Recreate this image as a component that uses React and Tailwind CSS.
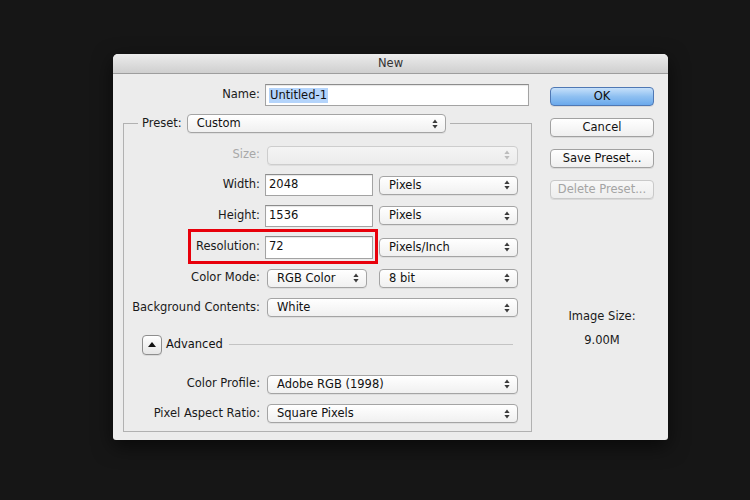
import React from 'react';

function Arrows({ dim }) {
  const c = dim ? '#bcbcbc' : '#3a3a3a';
  return (
    <svg width="6" height="10" viewBox="0 0 6 10" className="shrink-0">
      <path d="M3 0.6 L5.6 4 H0.4 Z" fill={c} />
      <path d="M3 9.4 L5.6 6 H0.4 Z" fill={c} />
    </svg>
  );
}

function Popup({ value, className = '', dim }) {
  return (
    <div
      className={
        'flex items-center justify-between h-[19px] rounded-[4px] border pl-[9px] pr-[7px] bg-linear-to-b shadow-[0_1px_0_rgba(0,0,0,0.06)] ' +
        (dim
          ? 'border-[#cdcdcd] from-[#f4f4f4] to-[#ececec] '
          : 'border-[#a4a4a4] from-white to-[#f0f0f0] text-[#111] ') +
        className
      }
    >
      <span className="leading-none pt-[1px]">{value}</span>
      <Arrows dim={dim} />
    </div>
  );
}

function Field({ children, className = '' }) {
  return (
    <div
      className={
        'flex items-center bg-white border border-[#a3a3a3] border-t-[#8c8c8c] pl-[3px] shadow-[inset_0_1px_1px_rgba(0,0,0,0.10)] text-[#111] ' +
        className
      }
    >
      {children}
    </div>
  );
}

function Label({ children, dim }) {
  return (
    <div className={'w-[136px] shrink-0 text-right ' + (dim ? 'text-[#a8a8a8]' : 'text-[#1a1a1a]')}>
      {children}
    </div>
  );
}

function Button({ children, primary, disabled }) {
  return (
    <div
      className={
        'h-[19px] w-[104px] flex items-center justify-center rounded-[4px] border bg-linear-to-b shadow-[0_1px_0_rgba(0,0,0,0.08)] ' +
        (primary
          ? 'border-[#4f78b4] from-[#c6e0fa] via-[#8fc0f1] to-[#6aa9ec] text-[#0d0d0d]'
          : disabled
          ? 'border-[#c9c9c9] from-[#f7f7f7] to-[#eeeeee] text-[#a4a4a4]'
          : 'border-[#a1a1a1] from-white to-[#efefef] text-[#111]')
      }
    >
      {children}
    </div>
  );
}

export default function App() {
  return (
    <div className="w-[750px] h-[500px] bg-[#161616] pt-[54px] pl-[113px] font-['DejaVu_Sans','Liberation_Sans',sans-serif] text-[11.5px]">
      <div className="w-[555px] h-[386px] flex flex-col rounded-t-[5px] rounded-b-[3px] overflow-hidden bg-[#ececec] shadow-[0_6px_20px_rgba(0,0,0,0.6)]">
        {/* title bar */}
        <div className="h-[20px] shrink-0 flex items-center justify-center bg-linear-to-b from-[#ececec] to-[#cfcfcf] border-b border-[#9d9d9d] text-[#333]">
          New
        </div>

        <div className="flex flex-1">
          {/* left column */}
          <div className="w-[427px] pl-[10px]">
            <div className="flex items-center mt-[10px] h-[22px]">
              <div className="w-[137px] text-right text-[#1a1a1a]">Name:</div>
              <Field className="ml-[5px] w-[264px] h-[22px]">
                <span className="bg-[#b4d4fb] px-[1px] leading-[15px]">Untitled-1</span>
              </Field>
            </div>

            <fieldset className="mt-[8px] w-[409px] border border-[#b1b1b1] pb-[5px]">
              <legend className="ml-[14px] px-[4px]">
                <div className="flex items-center">
                  <span className="text-[#1a1a1a]">Preset:</span>
                  <Popup value="Custom" className="ml-[5px] w-[259px]" />
                </div>
              </legend>

              <div className="pt-[7px]">
                <div className="flex items-center h-[30px]">
                  <Label dim>Size:</Label>
                  <Popup value="" dim className="ml-[7px] w-[251px] h-[18px]" />
                </div>

                <div className="flex items-center h-[30px]">
                  <Label>Width:</Label>
                  <Field className="ml-[5px] w-[108px] h-[22px]">2048</Field>
                  <Popup value="Pixels" className="ml-[6px] w-[139px]" />
                </div>

                <div className="flex items-center h-[31px]">
                  <Label>Height:</Label>
                  <Field className="ml-[5px] w-[108px] h-[22px]">1536</Field>
                  <Popup value="Pixels" className="ml-[6px] w-[139px]" />
                </div>

                <div className="relative flex items-center h-[32px]">
                  <Label>Resolution:</Label>
                  <Field className="ml-[5px] w-[108px] h-[23px]">72</Field>
                  <Popup value="Pixels/Inch" className="ml-[6px] w-[139px]" />
                  <div className="absolute left-[64px] top-[-2px] w-[190px] h-[35px] border-[3px] border-[#e8000b] pointer-events-none" />
                </div>

                <div className="flex items-center h-[30px]">
                  <Label>Color Mode:</Label>
                  <Popup value="RGB Color" className="ml-[7px] w-[100px]" />
                  <Popup value="8 bit" className="ml-[12px] w-[139px]" />
                </div>

                <div className="flex items-center h-[29px]">
                  <Label>Background Contents:</Label>
                  <Popup value="White" className="ml-[7px] w-[251px]" />
                </div>

                <div className="flex items-center h-[45px] pl-[18px]">
                  <div className="w-[20px] h-[20px] flex items-center justify-center rounded-[4px] border border-[#8e8e8e] bg-linear-to-b from-white to-[#e6e6e6] shadow-[0_1px_0_rgba(0,0,0,0.08)]">
                    <svg width="8" height="5" viewBox="0 0 8 5">
                      <path d="M4 0 L8 5 H0 Z" fill="#111" />
                    </svg>
                  </div>
                  <span className="ml-[4px] text-[#111]">Advanced</span>
                  <div className="flex-1 h-px bg-[#c3c3c3] ml-[6px] mr-[18px]" />
                </div>

                <div className="flex items-center h-[34px]">
                  <Label>Color Profile:</Label>
                  <Popup value="Adobe RGB (1998)" className="ml-[7px] w-[251px]" />
                </div>

                <div className="flex items-center h-[25px]">
                  <Label>Pixel Aspect Ratio:</Label>
                  <Popup value="Square Pixels" className="ml-[7px] w-[251px]" />
                </div>
              </div>
            </fieldset>
          </div>

          {/* right column */}
          <div className="pl-[10px] pt-[13px] flex flex-col">
            <div className="flex flex-col gap-[12px]">
              <Button primary>OK</Button>
              <Button>Cancel</Button>
              <Button>Save Preset...</Button>
              <Button disabled>Delete Preset...</Button>
            </div>
            <div className="w-[104px] text-center text-[#1a1a1a] mt-[110px] leading-[14px]">Image Size:</div>
            <div className="w-[104px] text-center text-[#1a1a1a] mt-[10px] leading-[14px]">9.00M</div>
          </div>
        </div>
      </div>
    </div>
  );
}
